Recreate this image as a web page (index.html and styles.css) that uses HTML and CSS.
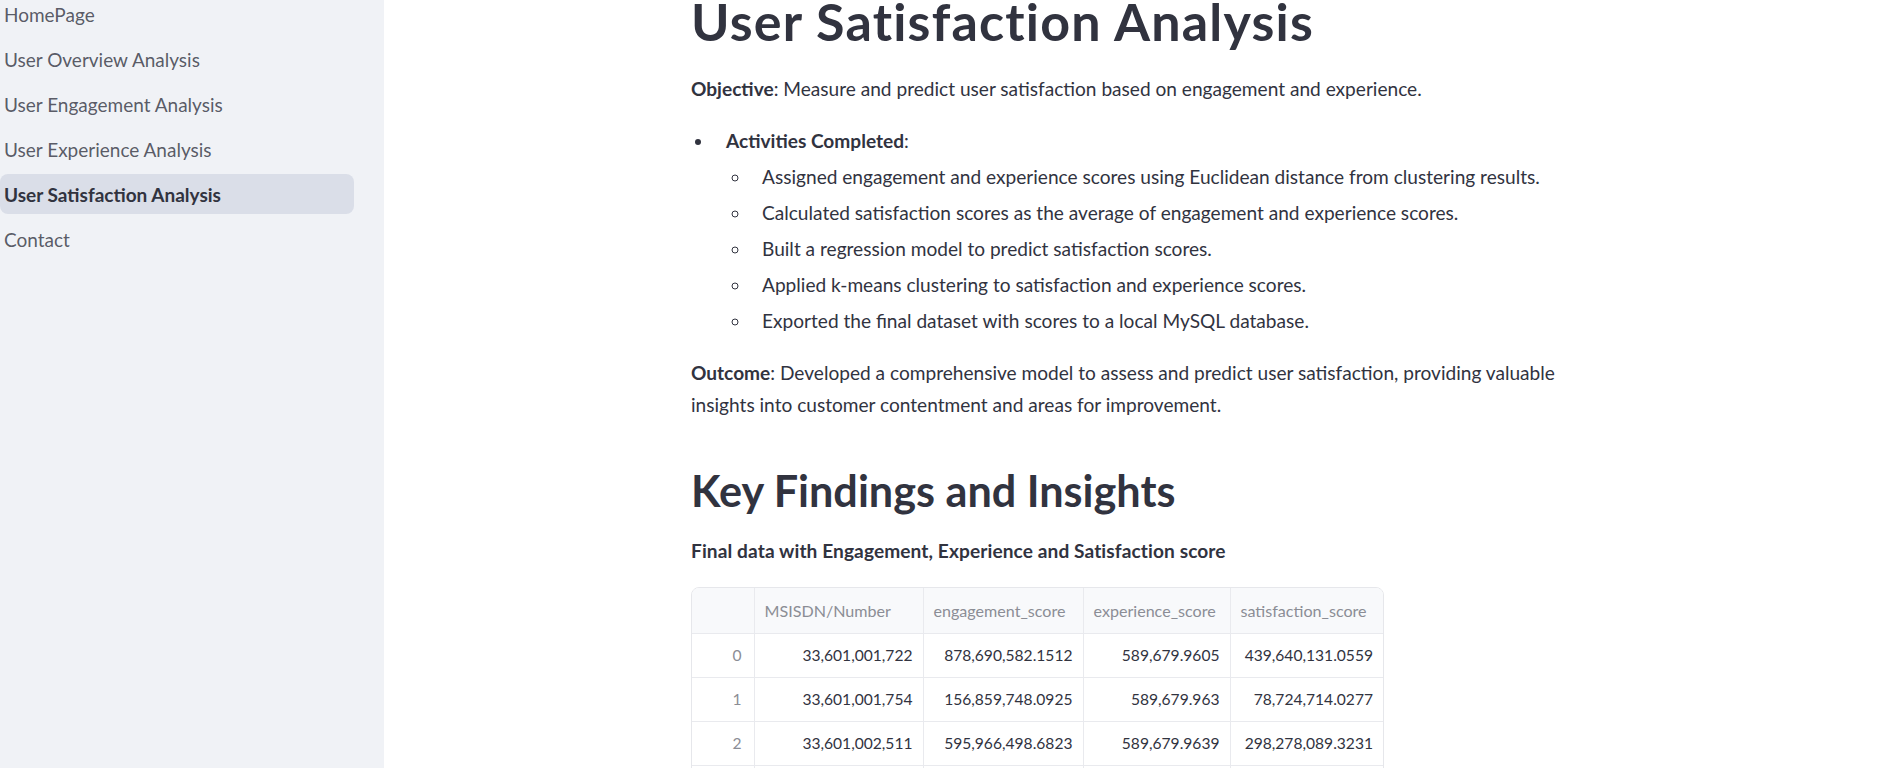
FILE: index.html
```html
<!DOCTYPE html>
<html lang="en">
<head>
<meta charset="utf-8">
<title>User Satisfaction Analysis</title>
<link rel="stylesheet" href="styles.css">
</head>
<body>
<div class="app">
  <aside class="sidebar">
    <ul class="nav">
      <li class="nav-link">HomePage</li>
      <li class="nav-link">User Overview Analysis</li>
      <li class="nav-link">User Engagement Analysis</li>
      <li class="nav-link">User Experience Analysis</li>
      <li class="nav-link active">User Satisfaction Analysis</li>
      <li class="nav-link">Contact</li>
    </ul>
  </aside>
  <main class="main">
    <div class="content">
      <h1 class="title">User Satisfaction Analysis</h1>
      <p class="text"><strong>Objective</strong>: Measure and predict user satisfaction based on engagement and experience.</p>
      <ul class="list">
        <li><strong>Activities Completed</strong>:
          <ul class="sublist">
            <li>Assigned engagement and experience scores using Euclidean distance from clustering results.</li>
            <li>Calculated satisfaction scores as the average of engagement and experience scores.</li>
            <li>Built a regression model to predict satisfaction scores.</li>
            <li>Applied k-means clustering to satisfaction and experience scores.</li>
            <li>Exported the final dataset with scores to a local MySQL database.</li>
          </ul>
        </li>
      </ul>
      <p class="text"><strong>Outcome</strong>: Developed a comprehensive model to assess and predict user satisfaction, providing valuable insights into customer contentment and areas for improvement.</p>
      <h2 class="heading">Key Findings and Insights</h2>
      <p class="text caption"><strong>Final data with Engagement, Experience and Satisfaction score</strong></p>
      <div class="grid">
        <table class="data">
          <colgroup>
            <col class="c-idx"><col class="c-num"><col class="c-eng"><col class="c-exp"><col class="c-sat">
          </colgroup>
          <thead>
            <tr><th></th><th>MSISDN/Number</th><th>engagement_score</th><th>experience_score</th><th>satisfaction_score</th></tr>
          </thead>
          <tbody>
            <tr><td class="idx">0</td><td>33,601,001,722</td><td>878,690,582.1512</td><td>589,679.9605</td><td>439,640,131.0559</td></tr>
            <tr><td class="idx">1</td><td>33,601,001,754</td><td>156,859,748.0925</td><td>589,679.963</td><td>78,724,714.0277</td></tr>
            <tr><td class="idx">2</td><td>33,601,002,511</td><td>595,966,498.6823</td><td>589,679.9639</td><td>298,278,089.3231</td></tr>
            <tr><td class="idx">3</td><td>33,601,007,832</td><td>422,766,029.6152</td><td>589,679.9612</td><td>211,677,854.7882</td></tr>
          </tbody>
        </table>
      </div>
    </div>
  </main>
</div>
</body>
</html>
```

FILE: styles.css
```css
* {
  box-sizing: border-box;
}

html,
body {
  margin: 0;
  padding: 0;
}

body {
  font-family: "Source Sans Pro", Lato, "Noto Sans", sans-serif;
  color: #31333f;
  background: #ffffff;
  overflow: hidden;
}

.app {
  display: flex;
  height: 768px;
  overflow: hidden;
}

.sidebar {
  flex: none;
  width: 384px;
  background: #f0f2f6;
}

.nav {
  list-style: none;
  margin: -6px 0 0;
  padding: 0;
  width: 354px;
  display: flex;
  flex-direction: column;
  gap: 5px;
}

.nav-link {
  display: flex;
  align-items: center;
  height: 40px;
  padding-left: 4px;
  border-radius: 8px;
  font-size: 19px;
  color: rgba(49, 51, 63, 0.8);
}

.nav-link.active {
  background: #dadee8;
  color: #31333f;
  font-weight: 700;
}

.main {
  flex: 1;
  display: flex;
  justify-content: center;
}

.content {
  width: 884px;
}

.title {
  font-size: 52px;
  font-weight: 700;
  letter-spacing: 1.2px;
  line-height: 66px;
  margin: -12px 0 19px;
}

.text {
  font-size: 19.1px;
  line-height: 32px;
  margin: 0 0 20px;
}

.text strong,
.list strong {
  font-weight: 700;
}

.list {
  font-size: 19.1px;
  line-height: 32px;
  margin: 0 0 20px;
  padding-left: 23px;
  list-style: disc;
}

.list li {
  margin: 0 0 4px;
  padding-left: 12px;
}

.sublist {
  list-style: circle;
  margin: 4px 0 0;
  padding-left: 25px;
}

.sublist li {
  padding-left: 11px;
}

.heading {
  font-size: 43.2px;
  font-weight: 700;
  line-height: 54px;
  margin: 42px 0 18px;
}

.caption {
  margin-bottom: 20px;
  letter-spacing: 0.1px;
}

.grid {
  width: 693px;
  border: 1px solid #e6e7eb;
  border-radius: 8px;
  overflow: hidden;
}

.data {
  width: 691px;
  border-collapse: collapse;
  table-layout: fixed;
  font-size: 15.6px;
}

.c-idx { width: 62px; }
.c-num { width: 169px; }
.c-eng { width: 160px; }
.c-exp { width: 147px; }
.c-sat { width: 153px; }

.data th,
.data td {
  border-right: 1px solid #e9eaee;
  border-bottom: 1px solid #e9eaee;
  padding: 0 10px;
  white-space: nowrap;
  overflow: hidden;
}

.data th:last-child,
.data td:last-child {
  border-right: none;
}

.data thead tr {
  height: 45px;
}

.data th {
  background: #f8f9fb;
  color: #8b8d95;
  font-weight: 400;
  font-size: 16.1px;
  text-align: left;
}

.data tbody tr {
  height: 44px;
}

.data td {
  text-align: right;
  color: #31333f;
}

.data td.idx {
  color: #8b8d95;
  padding-right: 12px;
}
```
